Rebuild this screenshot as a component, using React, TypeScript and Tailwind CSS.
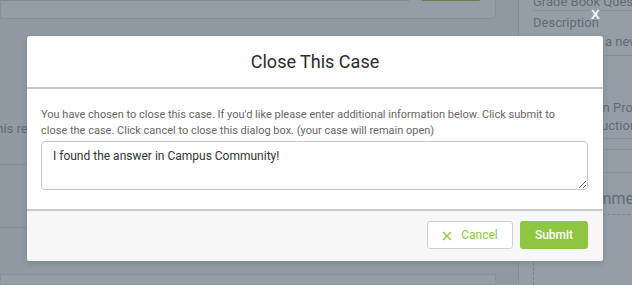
import React from "react";

export default function App() {
  return (
    <div className="relative w-[632px] h-[285px] overflow-hidden bg-white font-['Roboto',sans-serif]">
      {/* Underlying page */}
      <div className="flex h-full">
        <div className="w-[518px] shrink-0 flex flex-col bg-[#f6f6f6]">
          <div className="mt-[-30px] w-[496px] h-[50px] bg-white border border-[#e2e2e2] rounded-br-[4px] flex items-end pb-[17px] gap-[12px]">
            <div className="w-[408px] h-[30px] border-b border-[#d5d5d5]" />
            <div className="w-[60px] h-[30px] bg-[#8dc63f] rounded-[3px]" />
          </div>
          <div className="mt-[100px] text-[13px] text-[#999] -ml-[8px] leading-[20px] whitespace-nowrap">
            this record
          </div>
          <div className="mt-[25px] h-px w-[40px] bg-[#dcdcdc]" />
          <div className="mt-[62px] h-px w-[40px] bg-[#dcdcdc]" />
          <div className="mt-[47px] w-[496px] h-[20px] bg-white border border-[#e6e6e6]" />
        </div>
        <div className="flex-1 border-l border-[#dedede] bg-white pl-[14px] flex flex-col text-[#9a9a9a] whitespace-nowrap">
          <div className="-mt-[6px] text-[13px] leading-[16px]">Grade Book Questions</div>
          <div className="h-px bg-[#e4e4e4]" />
          <div className="mt-[4px] text-[13px] leading-[16px]">Description</div>
          <div className="mt-[3px] text-[13px] leading-[16px] pl-[72px]">a new case</div>
          <div className="mt-[5px] h-px bg-[#e4e4e4]" />
          <div className="mt-[43px] text-[13px] leading-[18px] pl-[66px]">In Products</div>
          <div className="text-[13px] leading-[18px] pl-[42px]">Instructions</div>
          <div className="mt-[3px] h-px bg-[#e4e4e4]" />
          <div className="mt-[10px] h-px bg-[#e4e4e4]" />
          <div className="mt-[22px] h-px bg-[#e4e4e4]" />
          <div className="mt-[16px] text-[16px] leading-[20px] pl-[45px]">Comments</div>
          <div className="mt-[5px] flex-1 border-l border-t border-dashed border-[#cfcfcf]" />
        </div>
      </div>

      {/* Overlay */}
      <div className="absolute inset-0 bg-[#2c3e50]/50" />

      {/* Close X */}
      <div className="absolute left-[591px] top-[7px] text-white text-[13px] font-bold font-['Liberation_Sans',sans-serif] leading-[16px]">
        X
      </div>

      {/* Modal */}
      <div className="absolute left-[27px] top-[36px] w-[576px] bg-white rounded-[3px] shadow-[0_2px_6px_rgba(0,0,0,0.15)] overflow-hidden">
        <div className="h-[53px] flex items-center justify-center text-[18px] text-[#2b2b2b] border-b-2 border-[#c9c9c9]">
          Close This Case
        </div>
        <div className="pl-[14px] pr-[15px] pt-[18px] pb-[19px]">
          <p className="text-[11px] leading-[16px] text-[#666] whitespace-nowrap">
            You have chosen to close this case. If you'd like please enter additional information below. Click submit to
            <br />
            close the case. Click cancel to close this dialog box. (your case will remain open)
          </p>
          <textarea
            className="mt-[2px] block w-full h-[49px] border border-[#c8c8c8] rounded-[4px] pl-[11px] pr-[8px] pt-[6px] text-[12px] leading-[17px] text-[#333] bg-white outline-none"
            defaultValue="I found the answer in Campus Community!"
          />
        </div>
        <div className="border-t-2 border-[#c9c9c9] bg-[#f7f7f7] flex justify-end gap-[7px] pl-[15px] pr-[15px] pt-[10px] pb-[12px]">
          <button className="h-[28px] w-[86px] flex items-center justify-center gap-[9px] bg-white border border-[#cfcfcf] rounded-[3px] text-[#8dc63f] text-[12px]">
            <svg width="10" height="10" viewBox="0 0 10 10" className="mt-[2px]">
              <path d="M1 1L9 9M9 1L1 9" stroke="#8dc63f" strokeWidth="1.3" fill="none" />
            </svg>
            <span>Cancel</span>
          </button>
          <button className="h-[28px] w-[68px] flex items-center justify-center bg-[#8dc63f] rounded-[3px] text-white text-[12px] font-medium">
            Submit
          </button>
        </div>
      </div>
    </div>
  );
}
